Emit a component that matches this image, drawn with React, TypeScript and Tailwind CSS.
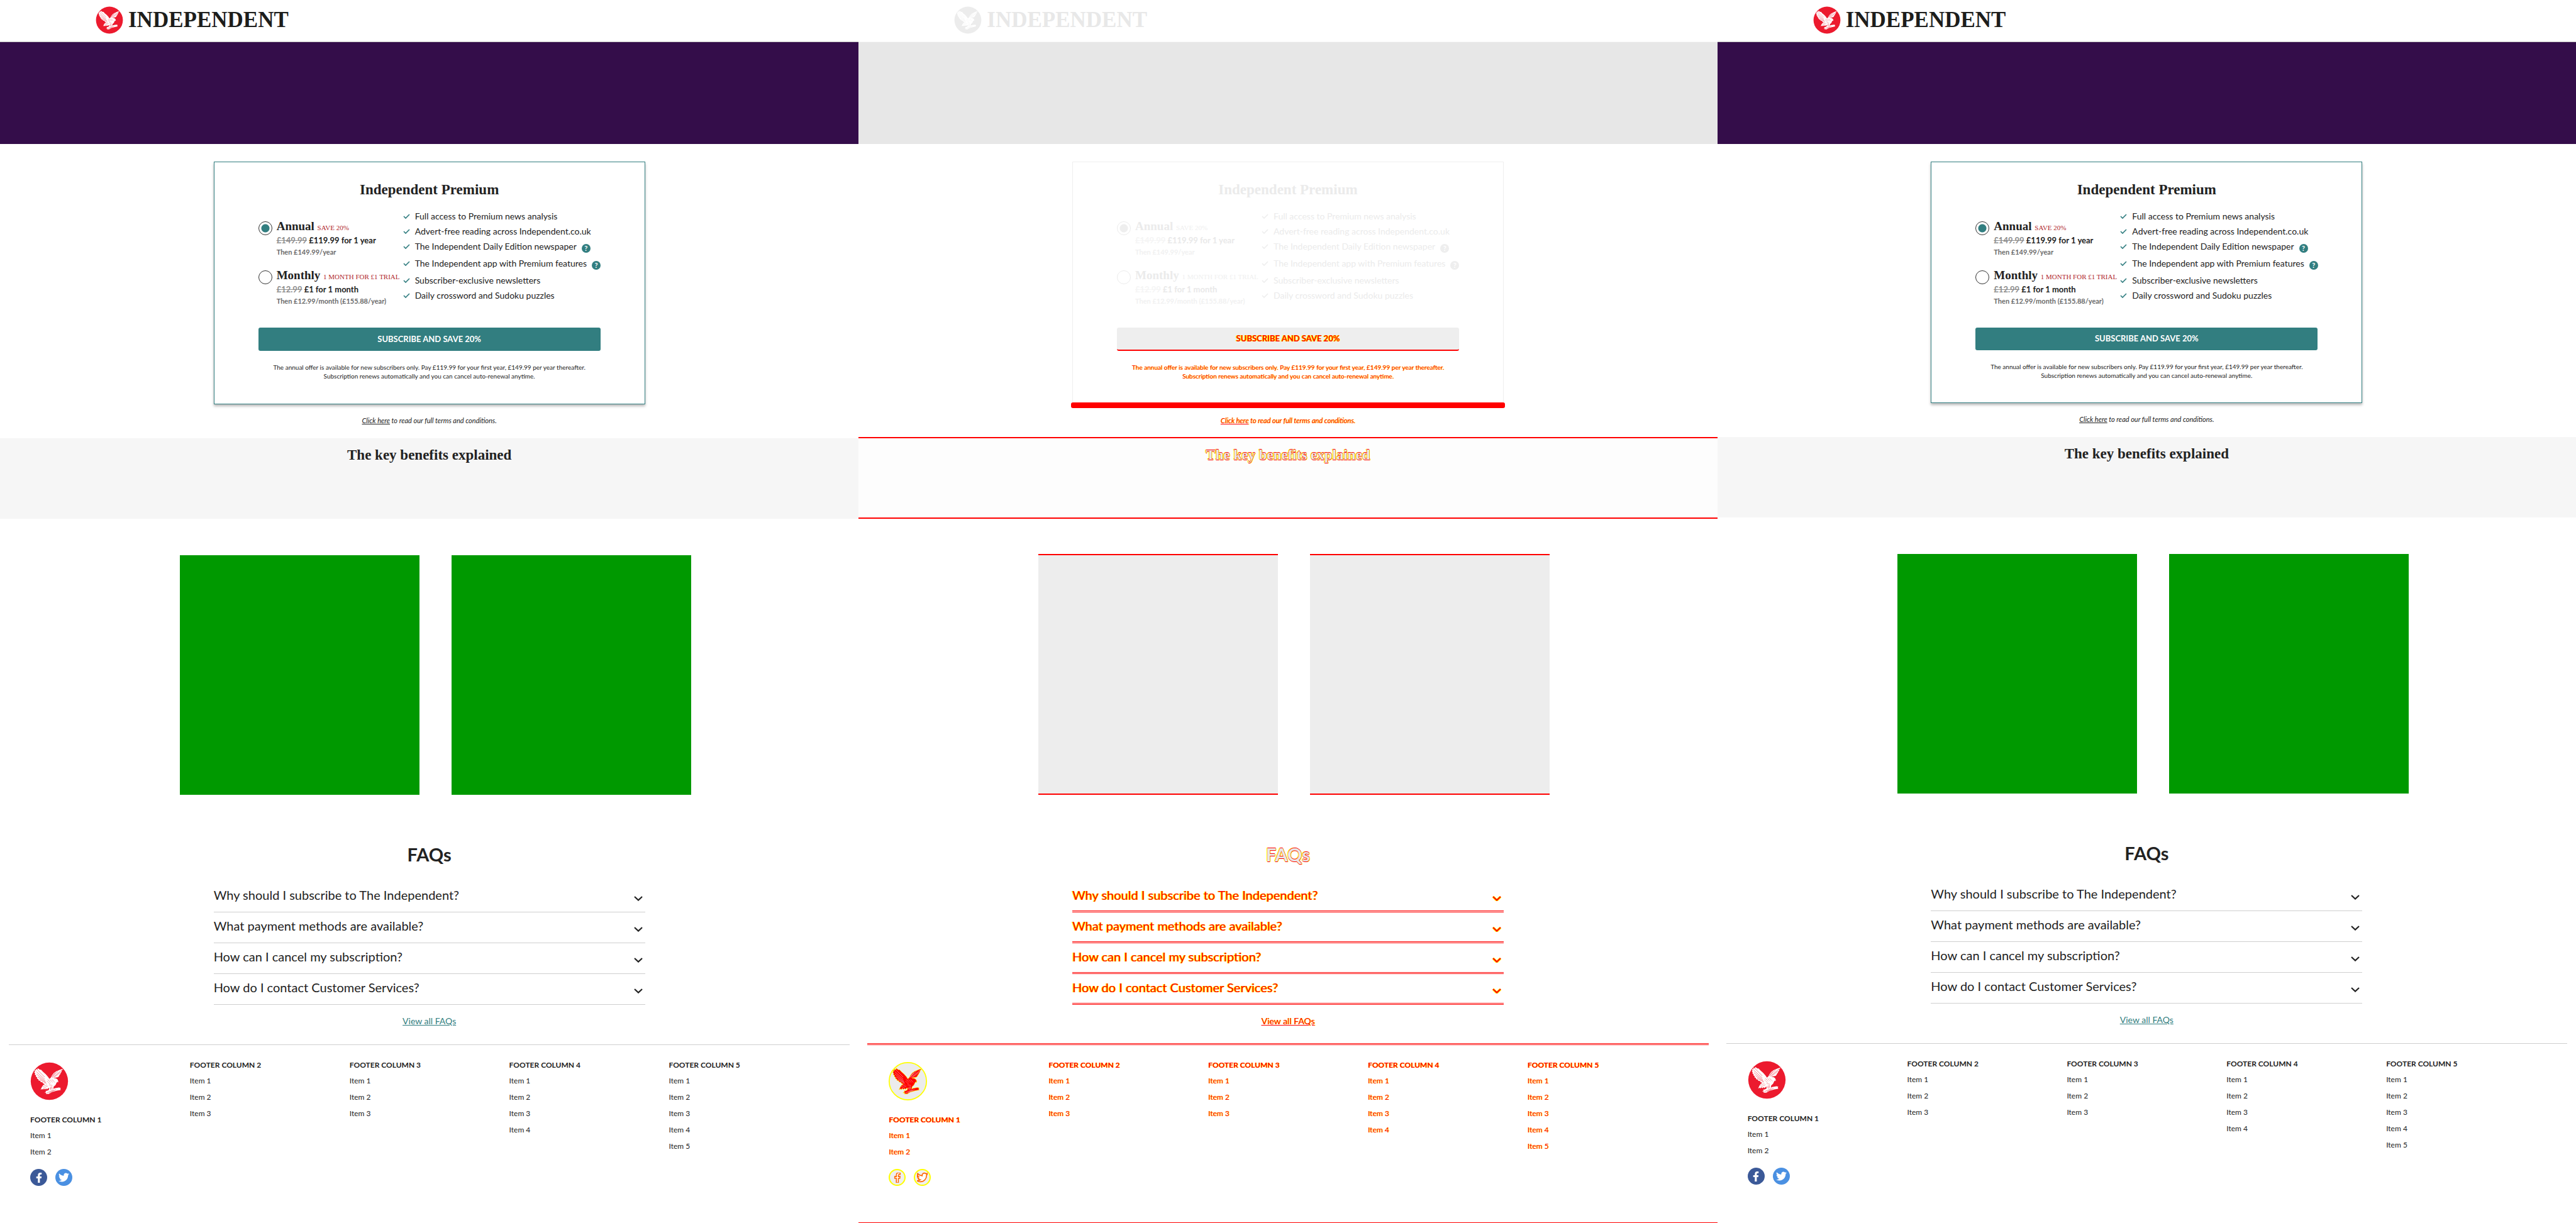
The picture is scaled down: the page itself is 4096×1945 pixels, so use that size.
import { FaFacebookF, FaTwitter } from "react-icons/fa";

type Variant = "before" | "diff" | "after";

const shiftedText = "text-[#ff0000] [text-shadow:1px_0_#ffff00]";
const shiftedQuestion = "text-[#ff0000] [text-shadow:1px_0_#ffff00,-1px_0_#ffff00]";
const shiftedHeading =
  "text-[#e8e8e8] [text-shadow:0_1px_#ff0000,0_-1px_#ff0000,1px_0_#ffff00,-1px_0_#ffff00,1px_1px_#ffff00,-1px_-1px_#ffff00]";

const live = {
  logoDisc: "text-[#ec1a2e]",
  logoWord: "text-[#1d1d1b]",
  headerLine: "border-[#c9c9c9]",
  hero: "bg-[#340d4a]",
  ink: "text-[#222222]",
  price: "text-[#222222]",
  was: "text-[#8e8e8e]",
  then: "text-[#6b6b6b]",
  offer: "text-[#b1282d]",
  radio: "border-[#333333] checked:[background:radial-gradient(circle,#327e80_6px,transparent_7px)]",
  accent: "text-[#327e80]",
  help: "bg-[#327e80]",
  small: "text-[#222222]",
  heading: "text-[#222222]",
  question: "text-[#222222]",
  link: "text-[#327e80]",
  tile: "h-[381px] bg-[#009900]",
  tiles: "pt-[58px]",
  band: "mt-[21px] h-32 bg-[#f6f6f6] pt-3",
  rule: "border-b border-[#cfcfcf]",
  footer: "mt-7 border-t border-[#cfcfcf] pt-[19px]",
};

const themes = {
  before: {
    ...live,
    card: "h-[386px] border border-[#327e80] shadow-[0_3px_4px_rgba(0,0,0,0.28)]",
    button: "h-[37px] bg-[#327e80] text-white",
    terms: "mt-[19px]",
  },
  after: {
    ...live,
    card: "h-[384px] border border-[#327e80] shadow-[0_3px_4px_rgba(0,0,0,0.28)]",
    button: "h-[36px] bg-[#327e80] text-white",
    terms: "mt-[19px]",
  },
  diff: {
    ...live,
    logoDisc: "text-[#ececec]",
    logoWord: "text-[#e8e8e8]",
    headerLine: "border-[#f8f8f8]",
    hero: "bg-[#e7e7e7]",
    ink: "text-[#ebebeb]",
    price: "text-[#e9e9e9]",
    was: "text-[#f5f5f5]",
    then: "text-[#f1f1f1]",
    offer: "text-[#f0f0f0]",
    radio: "border-[#ececec] checked:[background:radial-gradient(circle,#eeeeee_6px,transparent_7px)]",
    accent: "text-[#eeeeee]",
    help: "bg-[#eeeeee]",
    small: shiftedText,
    heading: shiftedHeading,
    question: shiftedQuestion,
    link: shiftedText,
    card: "h-[383px] border border-b-0 border-[#efefef]",
    button: "h-[37px] border-b-2 border-[#ff0000] bg-[#eeeeee] " + shiftedQuestion,
    terms: "mt-[13px]",
    tile: "h-[383px] border-y-2 border-[#ff0000] bg-[#ededed]",
    tiles: "pt-[56px]",
    band: "mt-[19px] h-[130px] border-y-2 border-[#ff0000] bg-[#fdfdfd] pt-3",
    rule: "border-b-[3px] border-double border-[#ff0000]",
    footer: "mt-[26px] border-t-[3px] border-double border-[#ff0000] pt-[19px]",
  },
};

type Theme = (typeof themes)["before"];

const plans = [
  {
    id: "annual",
    name: "Annual",
    offer: "SAVE 20%",
    was: "£149.99",
    now: "£119.99 for 1 year",
    then: "Then £149.99/year",
  },
  {
    id: "monthly",
    name: "Monthly",
    offer: "1 MONTH FOR £1 TRIAL",
    was: "£12.99",
    now: "£1 for 1 month",
    then: "Then £12.99/month (£155.88/year)",
  },
];

const features = [
  { label: "Full access to Premium news analysis", help: false },
  { label: "Advert-free reading across Independent.co.uk", help: false },
  { label: "The Independent Daily Edition newspaper", help: true },
  { label: "The Independent app with Premium features", help: true },
  { label: "Subscriber-exclusive newsletters", help: false },
  { label: "Daily crossword and Sudoku puzzles", help: false },
];

const questions = [
  "Why should I subscribe to The Independent?",
  "What payment methods are available?",
  "How can I cancel my subscription?",
  "How do I contact Customer Services?",
];

const footerColumns = [
  { title: "Footer column 1", items: 2 },
  { title: "Footer column 2", items: 3 },
  { title: "Footer column 3", items: 3 },
  { title: "Footer column 4", items: 4 },
  { title: "Footer column 5", items: 5 },
];

function Eagle({
  className,
  fill = "#ffffff",
  edge = "none",
}: {
  className: string;
  fill?: string;
  edge?: string;
}) {
  return (
    <svg viewBox="0 0 72 72" className={className} aria-hidden="true">
      <circle cx="36" cy="36" r="35" fill="currentColor" stroke={edge} strokeWidth="2" />
      <g fill={fill} stroke={edge} strokeWidth="0.8" strokeLinejoin="round">
        <path d="M14 11.5 L13.4 14.5 L10.6 12.8 L10.8 15.8 L8 15 L9 18.5 L7.4 19 L9.6 22 L8.4 23.4 L11.2 25.4 L10.4 27.2 L13.2 29 L12.6 31 L15.6 32.4 L15.6 34.4 L19 35.4 L19.6 37.4 L23 38 L24.4 40.4 L27.6 41.4 L24 43.6 L21.6 47.4 L19.6 52 L23 50.4 L23.4 52 L26.4 50 L27.4 51.6 L30 49.6 L31.4 51.2 L34 49 L35.4 48.6 L35 52.4 L31.4 54 L28.6 54.4 L30 56.4 L26.8 57.6 L30.4 58.2 L29.4 59.8 L35 60 L41 56.4 L50 53.8 L57.4 52.4 L56.4 50.6 L57.4 48.8 L54 47.8 L46 49.2 L43.6 50.6 L44 46.4 L47.6 43 L49.6 38.6 L51.6 36.8 L52 39 L52.8 36 L51.2 32.6 L48.4 30.6 L44 30 L52.4 28.2 L55 25.4 L54 25 L57.2 22 L56.4 21.4 L59.2 18 L58.4 17.6 L61.6 12.6 L56 14.4 L49 17.4 L44.6 20.4 L41 25 L38.6 29.4 L36 31.6 L33.4 27.6 L29 22.6 L24 18.4 L20.4 14.4 L18.4 14.6 Z" />
      </g>
      <g stroke="currentColor" strokeWidth="0.6" fill="none" strokeLinecap="round">
        <path d="M14 15 L27 28 M11.5 18 L27 32 M12 22.5 L28 35.5 M14.5 28 L29 38 M18 33 L30 40" />
        <path d="M59 15.5 L42 29 M56 20 L45 28.6 M52 17.4 L42 26.4 M47 19.8 L40.6 28" />
        <path d="M33 33 L38 38 M32 36 L37 41 M37 33 L42 38 M41 33 L46 38 M36 43 L42 44 M24 46 L31 43 M25 49 L33 45" strokeDasharray="0.8 1.4" />
        <path d="M37 49 L39 52 M40.4 46 L41.4 51 M38.4 47 L38.8 50 M32 57.6 L44 52.6 M36 58 L48 52" />
      </g>
    </svg>
  );
}

function Panel({ variant }: { variant: Variant }) {
  const t: Theme = themes[variant];
  const diff = variant === "diff";

  return (
    <section
      className={`flex min-h-screen min-w-0 flex-col font-['Lato','Open_Sans',sans-serif] ${
        diff ? "border-b border-[#ff0000]" : ""
      }`}
    >
      <header className={`h-[67px] border-b pl-[152px] pt-2.5 ${t.headerLine}`}>
        <a href="#" className="flex w-max items-center gap-2">
          <Eagle className={`size-11 ${t.logoDisc}`} />
          <span
            className={`font-['Liberation_Serif',serif] text-[35px] font-bold leading-11 ${t.logoWord}`}
          >
            INDEPENDENT
          </span>
        </a>
      </header>

      <div className={`h-[162px] ${t.hero}`} />

      <main className="flex flex-col">
        <form
          className={`mx-auto mt-7 w-[686px] px-[70px] pt-[29px] ${t.card}`}
          onSubmit={(e) => e.preventDefault()}
        >
          <h1
            className={`text-center font-['Liberation_Serif',serif] text-[23px] font-bold leading-[30px] ${t.ink}`}
          >
            Independent Premium
          </h1>

          <div className="mt-[15px] flex">
            <div className="mt-4 flex w-[230px] shrink-0 flex-col gap-[17px] whitespace-nowrap">
              {plans.map((plan, i) => (
                <div key={plan.id} className="flex gap-[7px]">
                  <input
                    type="radio"
                    id={`${variant}-${plan.id}`}
                    name={`${variant}-plan`}
                    defaultChecked={i === 0}
                    className={`mt-1 size-[22px] shrink-0 appearance-none rounded-full border ${t.radio}`}
                  />
                  <label htmlFor={`${variant}-${plan.id}`} className="font-bold">
                    <span className={`block font-['Liberation_Serif',serif] text-[19px] leading-6 ${t.ink}`}>
                      {plan.name}{" "}
                      <span className={`text-[11px] font-normal leading-none ${t.offer}`}>{plan.offer}</span>
                    </span>
                    <span className={`block text-[13px] leading-[21px] ${t.price}`}>
                      <s className={t.was}>{plan.was}</s> {plan.now}
                    </span>
                    <span className={`block text-[11px] leading-4 ${t.then}`}>{plan.then}</span>
                  </label>
                </div>
              ))}
            </div>

            <ul className={`whitespace-nowrap text-[14px] leading-6 ${t.ink}`}>
              {features.map((f) => (
                <li key={f.label} className={`flex gap-2 ${f.help ? "h-[27px]" : "h-6"}`}>
                  <svg viewBox="0 0 11 8" className={`mt-2 h-2 w-[11px] ${t.accent}`} aria-hidden="true">
                    <path d="M1 4 L4 7 L10 1" fill="none" stroke="currentColor" strokeWidth="1.7" />
                  </svg>
                  {f.label}
                  {f.help && (
                    <button
                      type="button"
                      aria-label="More information"
                      className={`mt-2 size-3.5 rounded-full text-center text-[11px] font-bold leading-3.5 text-white ${t.help}`}
                    >
                      ?
                    </button>
                  )}
                </li>
              ))}
            </ul>
          </div>

          <button
            type="submit"
            className={`mt-[34px] w-full rounded-[3px] text-[13px] font-bold ${t.button}`}
          >
            SUBSCRIBE AND SAVE 20%
          </button>

          <p className={`mt-[19px] text-center text-[10px] leading-3.5 ${t.small}`}>
            The annual offer is available for new subscribers only. Pay £119.99 for your first year, £149.99
            per year thereafter.
            <br />
            Subscription renews automatically and you can cancel auto-renewal anytime.
          </p>
        </form>
        {diff && <div className="mx-auto h-[9px] w-[690px] rounded-[3px] bg-[#ff0000]" />}

        <p className={`text-center text-[11px] italic leading-3.5 ${t.small} ${t.terms}`}>
          <a href="#" className="underline">
            Click here
          </a>{" "}
          to read our full terms and conditions.
        </p>

        <div className={t.band}>
          <h2
            className={`text-center font-['Liberation_Serif',serif] text-[23px] font-bold leading-[30px] ${t.heading}`}
          >
            The key benefits explained
          </h2>
        </div>

        <div className={`flex justify-center gap-[51px] pl-5 ${t.tiles}`}>
          <div className={`w-[381px] ${t.tile}`} />
          <div className={`w-[381px] ${t.tile}`} />
        </div>

        <h2 className={`mt-[77px] text-center text-[29px] font-bold leading-9 ${t.heading}`}>FAQs</h2>
        <div className="mx-auto mt-[25px] w-[686px]">
          {questions.map((q) => (
            <button
              key={q}
              type="button"
              className={`flex h-[49px] w-full items-start justify-between pr-1 pt-[7px] text-left text-[20px] leading-7 ${t.question} ${t.rule}`}
            >
              {q}
              <svg viewBox="0 0 14 8" className="mt-4 h-2 w-3.5" aria-hidden="true">
                {diff && <path d="M1 1 L7 7 L13 1" fill="none" stroke="#ffff00" strokeWidth="4" />}
                <path d="M1 1 L7 6.6 L13 1" fill="none" stroke="currentColor" strokeWidth="2.2" />
              </svg>
            </button>
          ))}
        </div>
        <a href="#" className={`mx-auto mt-[17px] text-[14px] leading-[18px] underline ${t.link}`}>
          View all FAQs
        </a>
      </main>

      <footer className={`mx-3.5 grid grid-cols-5 px-[34px] text-[12px] ${t.small} ${t.footer}`}>
        {footerColumns.map((col, i) => (
          <div key={col.title}>
            {i === 0 && (
              <Eagle
                className={`mb-[18px] mt-2 size-[61px] ${t.logoDisc}`}
                fill={diff ? "#ff0000" : "#ffffff"}
                edge={diff ? "#ffff00" : "none"}
              />
            )}
            <h3 className="font-bold uppercase leading-[25px]">{col.title}</h3>
            <ul className="leading-[26px]">
              {Array.from({ length: col.items }, (_, n) => (
                <li key={n}>
                  <a href="#">Item {n + 1}</a>
                </li>
              ))}
            </ul>
            {i === 0 && (
              <div className="mt-3.5 flex gap-[13px]">
                <a
                  href="#"
                  aria-label="Facebook"
                  className={`flex size-[27px] items-center justify-center rounded-full ${
                    diff ? "border-2 border-[#ffff00] bg-[#eeeeee]" : "bg-[#3b5998]"
                  }`}
                >
                  <FaFacebookF
                    className={`size-4 ${diff ? "stroke-[#ff6600] stroke-[50px] text-white" : "text-white"}`}
                  />
                </a>
                <a
                  href="#"
                  aria-label="Twitter"
                  className={`flex size-[27px] items-center justify-center rounded-full ${
                    diff ? "border-2 border-[#ffff00] bg-[#f0f0f0]" : "bg-[#4a90e2]"
                  }`}
                >
                  <FaTwitter
                    className={`size-[17px] ${diff ? "stroke-[#ff6600] stroke-[50px] text-white" : "text-white"}`}
                  />
                </a>
              </div>
            )}
          </div>
        ))}
      </footer>
    </section>
  );
}

export default function App() {
  return (
    <div className="grid grid-cols-3 bg-white">
      <Panel variant="before" />
      <Panel variant="diff" />
      <Panel variant="after" />
    </div>
  );
}
